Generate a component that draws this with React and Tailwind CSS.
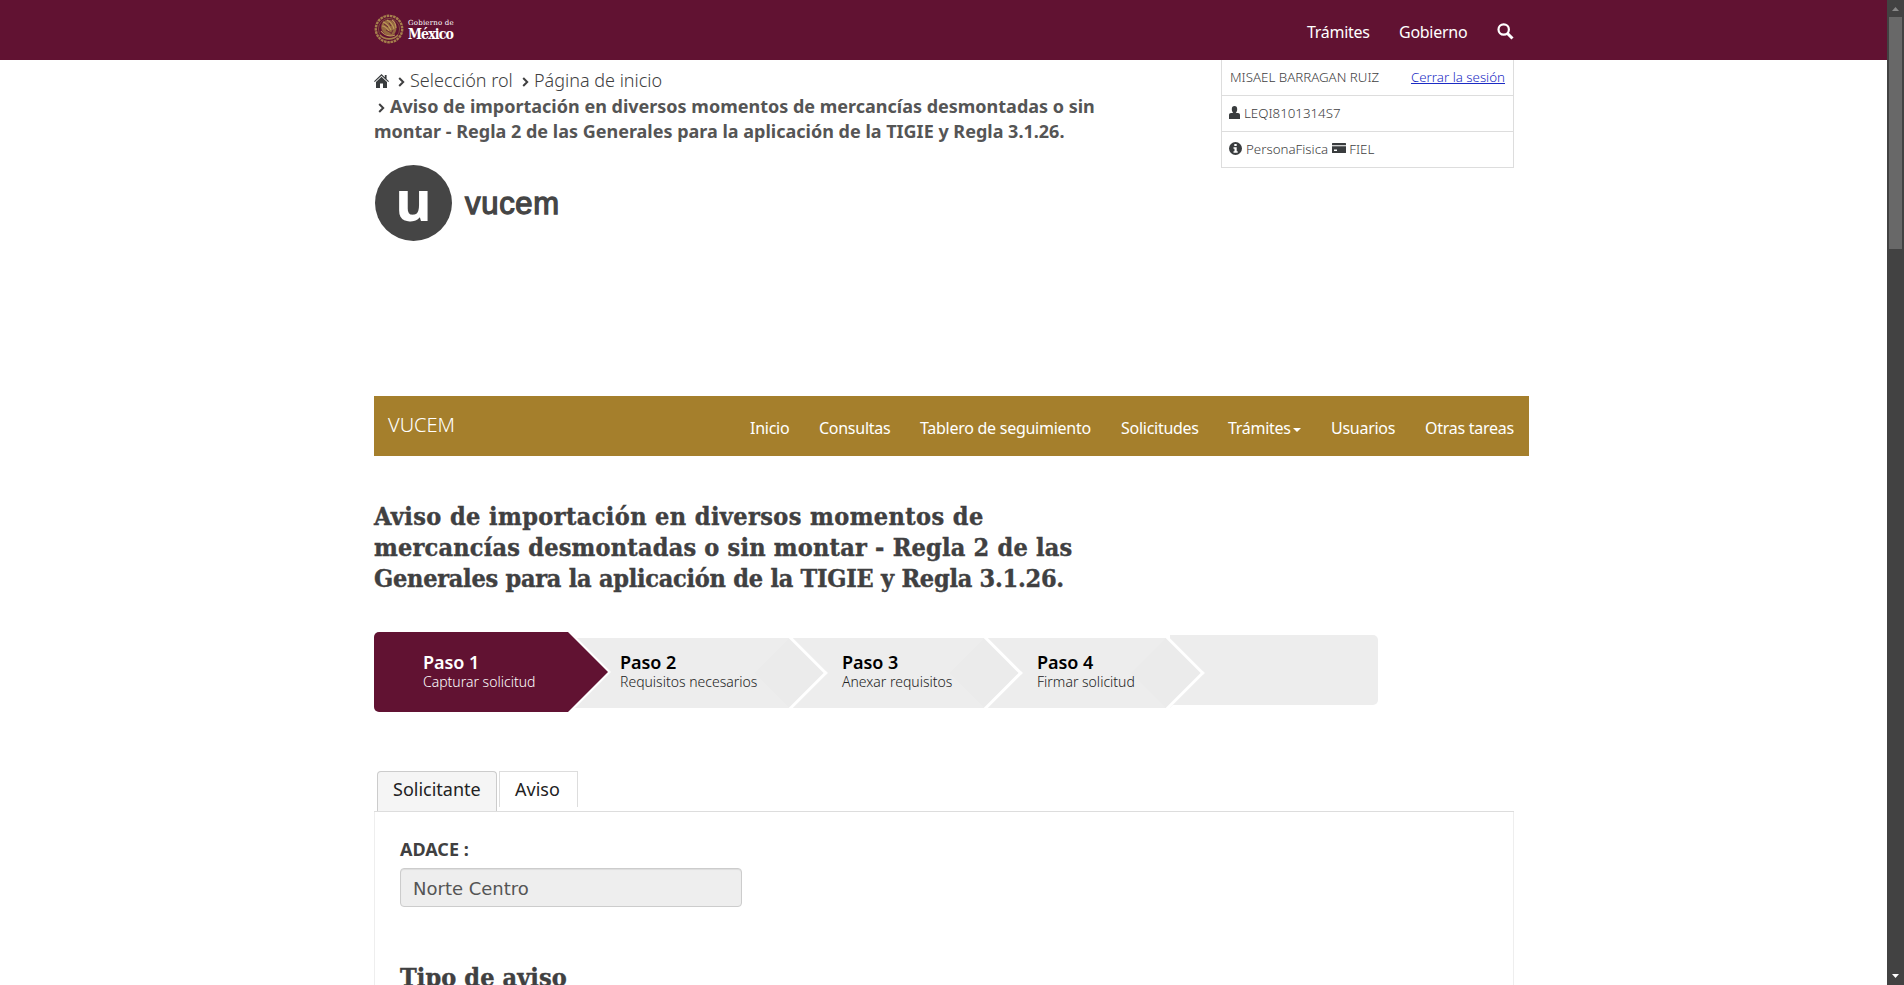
import React from "react";

const BREAD = ["Aviso de importación en diversos momentos de mercancías desmontadas o sin", "montar - Regla 2 de las Generales para la aplicación de la TIGIE y Regla 3.1.26."];

function Emblem() {
  return (
    <svg width="30" height="30" viewBox="0 0 30 30" fill="none" stroke="#a57f4c">
      <circle cx="15" cy="15" r="13.2" strokeWidth="2.4" strokeDasharray="2.6 0.7" />
      <circle cx="15" cy="15" r="10.6" strokeWidth="0.7" stroke="#8d5f42" />
      <path d="M9 8c3-3 8-3 10 0l3 3c1 4 0 8-3 10-3 1-7 0-9-2-3-3-4-7-1-11z" fill="#94683f" stroke="none" />
      <path d="M8 12c3 0 5 2 7 5M9 8c4 1 6 4 8 8M13 6c4 2 6 5 7 9M18 6c3 2 4 5 4 8M7 17c3 4 8 6 14 4" strokeWidth="1.1" stroke="#c09a5c" />
      <path d="M10 10l4 3M15 9l2 3M12 16l5 3M19 16l-2 4" stroke="#611232" strokeWidth="0.8" />
      <path d="M6 21c4 5 14 5 18 0" strokeWidth="1.4" />
    </svg>
  );
}

function Home() {
  return (
    <svg className="mt-[7px]" width="15" height="14" viewBox="0 0 15 14" fill="#393c3e">
      <path d="M7.5 0L0 7.2l.8.8L7.5 1.8 14.2 8l.8-.8-2.400-2.300V1h-1.800v2.200z" />
      <path d="M7.5 2.800L2 8v6h4V9.600h3V14h4V8z" />
    </svg>
  );
}

function Chevron({ className }) {
  return (
    <svg className={className} width="7" height="10" viewBox="0 0 7 10" fill="none" stroke="#404041" strokeWidth="2">
      <path d="M1.2 1l4 4-4 4" />
    </svg>
  );
}

function Link({ children, className }) {
  return <a className={"block whitespace-nowrap text-base leading-6 tracking-[-0.270px] " + className}>{children}</a>;
}

function Arrow() {
  return <div className="absolute -right-[27px] top-[9px] size-[52px] rotate-45 border-t-[3px] border-r-[3px] border-white bg-[#ebebeb]" />;
}

function Step({ title, sub, className, pad, z }) {
  return (
    <div className={"relative h-[70px] bg-[#ededed] " + className + " " + z}>
      <div className="absolute inset-y-0 left-0 -right-[40px] overflow-hidden">
        <div className="relative mr-[40px] h-[70px]"><Arrow /></div>
      </div>
      <div className={"relative pt-[13px] whitespace-nowrap " + pad}>
        <div className="h-[21px] text-lg leading-[22px] font-semibold tracking-[-0.050px] text-black">{title}</div>
        <div className="h-[20px] text-sm leading-[20px] font-light text-[#222]">{sub}</div>
      </div>
    </div>
  );
}

function Header() {
  return (
    <header className="flex h-[60px] bg-[#611232] pl-[374px] text-white">
      <div className="mt-[14px] h-[30px] w-[30px]"><Emblem /></div>
      <div className="mt-[19px] ml-1 w-[60px] whitespace-nowrap">
        <div className="h-[9px] font-['DejaVu_Serif',serif] text-[7px] leading-[9px] tracking-[0.2px]">Gobierno de</div>
        <div className="h-[13px] font-['DejaVu_Serif_Condensed','DejaVu_Serif',serif] text-[14px] leading-[13px] font-bold tracking-[-0.9px]">México</div>
      </div>
      <Link className="mt-5 ml-[839px] w-[92px]">Trámites</Link>
      <Link className="mt-5 w-[98px]">Gobierno</Link>
      <svg className="mt-[23px]" width="17" height="17" viewBox="0 0 17 17" fill="none" stroke="#fff">
        <circle cx="6.7" cy="6.5" r="5.2" strokeWidth="2.2" />
        <path d="M10.5 10.5l5 5" strokeWidth="3" />
      </svg>
    </header>
  );
}

function UserBox() {
  return (
    <div className="h-[108px] w-[293px] border-x border-[#ddd] text-[13.300px] leading-[20px] font-light text-[#404041]">
      <div className="flex h-[36px] justify-between border-b border-[#ddd] pt-[7px] pr-2 pl-2">
        <span>MISAEL BARRAGAN RUIZ</span>
        <a className="text-[#1b2bc4] underline">Cerrar la sesión</a>
      </div>
      <div className="flex h-[36px] border-b border-[#ddd] pt-[7px] pl-[7px]">
        <svg className="mt-[3px] mr-1" width="11" height="13" viewBox="0 0 11 13" fill="#393c3e">
          <path d="M5.500 0C7.300 0 8.200 1.200 8.200 3.200c0 1.800-.8 3.200-1.500 3.800h2.300c1.200 0 2 .8 2 2V13H0V9c0-1.200.8-2 2-2h2.300C3.600 6.400 2.800 5 2.800 3.200 2.800 1.200 3.700 0 5.500 0z" />
        </svg>
        LEQI8101314S7
      </div>
      <div className="flex h-[36px] border-b border-[#ddd] pt-[7px] pl-[7px]">
        <svg className="mt-[3px] mr-1" width="13" height="13" viewBox="0 0 13 13">
          <circle cx="6.500" cy="6.500" r="6.500" fill="#393c3e" />
          <path d="M5.300 2h2.400v2H5.300zM4.500 5.200h3.200v4h1v1.500H4.500V9.200h1V6.700h-1z" fill="#fff" />
        </svg>
        PersonaFisica
        <svg className="mt-[4px] mr-[3px] ml-1" width="14" height="10" viewBox="0 0 14 10">
          <rect width="14" height="10" rx="0.500" fill="#393c3e" />
          <path d="M0 2.200h14v1H0zM2 6.500h3v1.500H2z" fill="#fff" />
        </svg>
        FIEL
      </div>
    </div>
  );
}

export default function App() {
  return (
    <div className="flex h-[985px] w-[1904px] overflow-hidden bg-white font-['Noto_Sans',sans-serif] text-[#404041]">
      <div className="w-[1887px] shrink-0">
        <Header />

        <div className="flex h-[105px] pl-[374px]">
          <div className="w-[847px] pt-[7px] text-lg whitespace-nowrap">
            <div className="flex h-[26px] leading-[26px] font-light">
              <Home />
              <Chevron className="mt-[10px] ml-[9px] mr-[5px]" />
              <span className="w-[112px]">Selección rol</span>
              <Chevron className="mt-[10px] mr-[5px]" />
              <span>Página de inicio</span>
            </div>
            <div className="flex h-[25px] leading-[26px] font-bold text-[#555]">
              <Chevron className="mt-[10px] mr-[5px] ml-1" />
              <span>{BREAD[0]}</span>
            </div>
            <div className="h-[26px] leading-[26px] font-bold text-[#555]">{BREAD[1]}</div>
          </div>
          <UserBox />
        </div>

        <div className="flex h-[231px] pl-[375px]">
          <div className="flex h-[76px] w-[77px] justify-center rounded-[50%] bg-[#454545] text-[56px] leading-[68px] font-bold text-white">u</div>
          <div className="mt-[19px] ml-[13px] font-['Liberation_Sans',sans-serif] text-[31px] leading-[40px] tracking-[0.700px] text-[#454545] [-webkit-text-stroke:1.300px_#454545]">vucem</div>
        </div>

        <nav className="ml-[374px] flex h-[60px] w-[1155px] bg-[#a57f2c] pl-[14px] text-white">
          <span className="mt-[16px] w-[362px] text-xl leading-[26px] font-light">VUCEM</span>
          <Link className="mt-5 w-[69px]">Inicio</Link>
          <Link className="mt-5 w-[101px]">Consultas</Link>
          <Link className="mt-5 w-[201px]">Tablero de seguimiento</Link>
          <Link className="mt-5 w-[107px]">Solicitudes</Link>
          <Link className="mt-5 w-[65px]">Trámites</Link>
          <span className="mt-[32px] mr-[30px] h-1 w-2 bg-white [clip-path:polygon(0_0,100%_0,50%_100%)]" />
          <Link className="mt-5 w-[94px]">Usuarios</Link>
          <Link className="mt-5">Otras tareas</Link>
        </nav>

        <h1 className="mt-[45px] ml-[374px] h-[93px] font-['DejaVu_Serif_Condensed','DejaVu_Serif',serif] text-[25px] leading-[31px] font-bold whitespace-nowrap [-webkit-text-stroke:0.400px_#404041]">
          <div className="tracking-[0.400px]">Aviso de importación en diversos momentos de</div>
          <div className="tracking-[0.210px]">mercancías desmontadas o sin montar - Regla 2 de las</div>
          <div className="tracking-[-0.250px]">Generales para la aplicación de la TIGIE y Regla 3.1.26.</div>
        </h1>

        <div className="mt-[38px] ml-[374px] flex h-[80px] w-[1004px]">
          <div className="relative z-40 h-[80px] w-[194px] rounded-l-[5px] bg-[#611232] text-white">
            <div className="absolute top-0 left-[194px] h-[80px] w-[43px] bg-white [clip-path:polygon(0_0,3px_0,100%_50%,3px_100%,0_100%)]" />
            <div className="absolute top-0 left-[193px] h-[80px] w-[41px] bg-[#611232] [clip-path:polygon(0_0,1px_0,100%_50%,1px_100%,0_100%)]" />
            <div className="relative pt-[19px] pl-[49px] whitespace-nowrap">
              <div className="h-[21px] text-lg leading-[22px] font-semibold tracking-[-0.050px]">Paso 1</div>
              <div className="h-[20px] text-sm leading-[20px] font-light">Capturar solicitud</div>
            </div>
          </div>
          <Step title="Paso 2" sub="Requisitos necesarios" className="mt-[6px] w-[222px]" pad="pl-[52px]" z="z-30" />
          <Step title="Paso 3" sub="Anexar requisitos" className="mt-[6px] w-[195px]" pad="pl-[52px]" z="z-20" />
          <Step title="Paso 4" sub="Firmar solicitud" className="mt-[6px] w-[182px]" pad="pl-[52px]" z="z-10" />
          <div className="mt-[3px] h-[70px] flex-1 rounded-r-[5px] border-l-[3px] border-white bg-[#ededed]" />
        </div>

        <div className="mt-[59px] ml-[374px] flex h-[41px] w-[1140px] border-b border-[#ddd] pl-[3px] text-lg text-[#222]">
          <div className="h-[40px] w-[120px] rounded-t-[4px] border border-b-0 border-[#ccc] bg-[#f5f5f5] pl-[15px] leading-[34px]">Solicitante</div>
          <div className="ml-[2px] h-[36px] w-[79px] border border-b-0 border-[#ddd] pl-[15px] leading-[34px]">Aviso</div>
        </div>
        <div className="ml-[374px] h-[173px] w-[1140px] overflow-hidden border-x border-[#eee] pl-[25px]">
          <div className="mt-[24px] h-[26px] text-lg leading-[26px] font-bold">ADACE :</div>
          <div className="mt-[6px] h-[39px] w-[342px] rounded-[4px] border border-[#ccc] bg-[#eee] pl-3 font-['DejaVu_Sans',sans-serif] text-lg leading-[39px] text-[#555] shadow-[inset_0_1px_1px_rgba(0,0,0,0.075)]">Norte Centro</div>
          <div className="mt-[55px] font-['DejaVu_Serif_Condensed','DejaVu_Serif',serif] text-[25px] leading-[31px] font-bold tracking-[0.100px] whitespace-nowrap [-webkit-text-stroke:0.400px_#404041]">Tipo de aviso</div>
        </div>
      </div>

      <div className="flex w-[17px] shrink-0 flex-col items-center bg-[#424242]">
        <div className="mt-[7px] h-1 w-[7px] bg-[#888] [clip-path:polygon(50%_0,100%_100%,0_100%)]" />
        <div className="mt-[6px] h-[232px] w-[13px] bg-[#686868]" />
        <div className="mt-[725px] h-1 w-[7px] bg-white [clip-path:polygon(0_0,100%_0,50%_100%)]" />
      </div>
    </div>
  );
}
